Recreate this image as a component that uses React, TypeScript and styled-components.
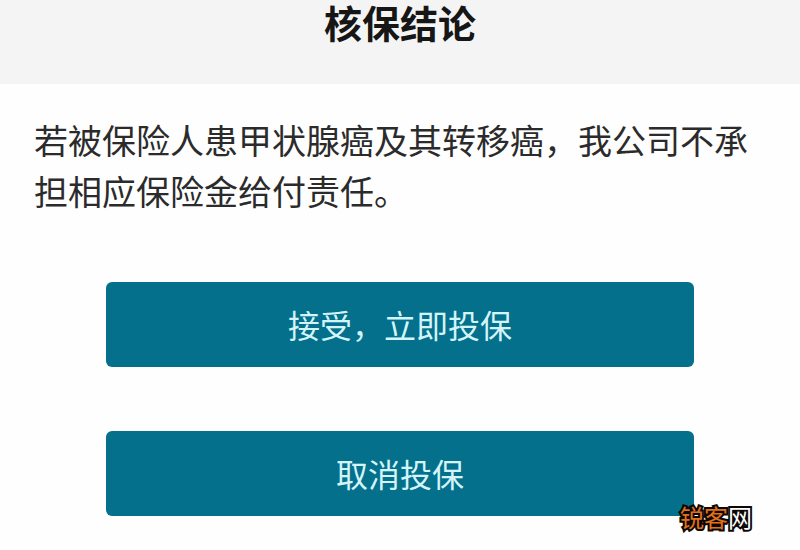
import React from 'react';
import styled, { createGlobalStyle } from 'styled-components';

const GlobalStyle = createGlobalStyle`
  *, *::before, *::after {
    box-sizing: border-box;
  }
  body {
    margin: 0;
    background: #fefefe;
    font-family: 'Noto Sans CJK SC', sans-serif;
  }
`;

const Page = styled.div`
  position: relative;
  display: flex;
  flex-direction: column;
  min-height: 100vh;
`;

const Header = styled.header`
  display: flex;
  justify-content: center;
  padding-bottom: 40px;
  background: #f4f4f4;
`;

const Title = styled.h1`
  margin: 0;
  color: #161616;
  font-size: 38px;
  font-weight: 700;
  line-height: 44px;
`;

const Conclusion = styled.p`
  margin: 0;
  padding: 30px 34px 0;
  color: #2b2b2b;
  font-size: 34px;
  line-height: 51px;
`;

const Actions = styled.div`
  display: flex;
  flex-direction: column;
  gap: 64px;
  padding: 66px 106px 34px;
`;

const ActionButton = styled.button`
  height: 85px;
  padding: 0 0 2px;
  border: 0;
  border-radius: 6px;
  background: #04708b;
  color: #d3f5fa;
  font-family: inherit;
  font-size: 32px;
  cursor: pointer;
`;

const Watermark = styled.div`
  position: absolute;
  right: 48px;
  bottom: 15px;
  color: #ffffff;
  font-size: 24px;
  font-weight: 400;
  line-height: 36px;
  -webkit-text-stroke: 4px #0c0806;
  paint-order: stroke fill;
`;

const WatermarkAccent = styled.span`
  color: #e2701a;
`;

export default function App() {
  return (
    <>
      <GlobalStyle />
      <Page>
        <Header>
          <Title>核保结论</Title>
        </Header>
        <main>
          <Conclusion>
            若被保险人患甲状腺癌及其转移癌，我公司不承担相应保险金给付责任。
          </Conclusion>
          <Actions>
            <ActionButton type="button">接受，立即投保</ActionButton>
            <ActionButton type="button">取消投保</ActionButton>
          </Actions>
        </main>
        <Watermark>
          <WatermarkAccent>锐客</WatermarkAccent>网
        </Watermark>
      </Page>
    </>
  );
}
